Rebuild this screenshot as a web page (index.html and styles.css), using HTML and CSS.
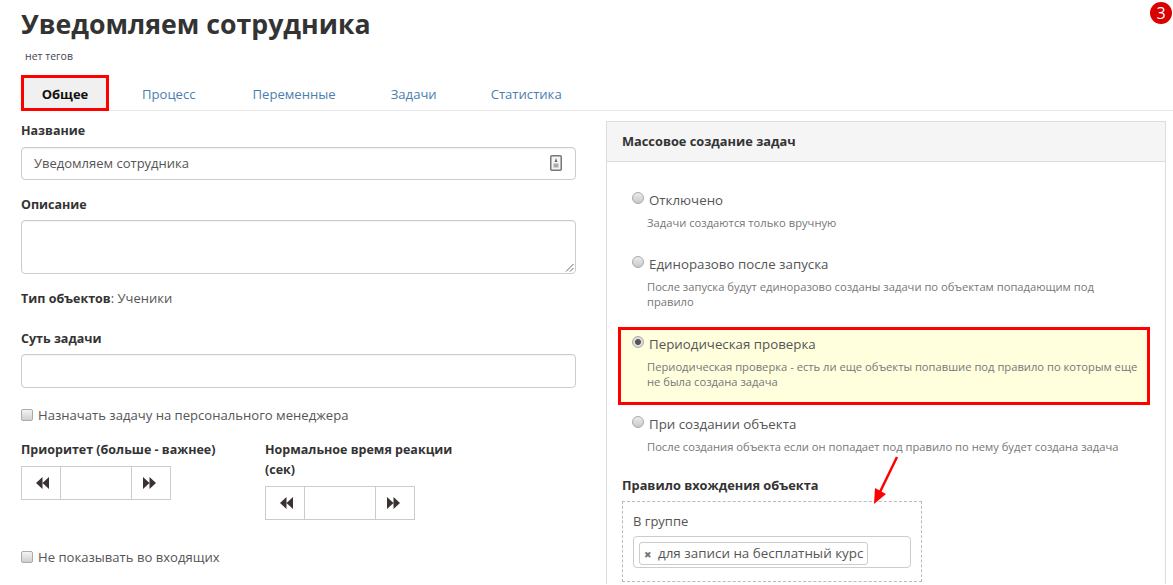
FILE: index.html
```html
<!DOCTYPE html>
<html lang="ru">
<head>
<meta charset="UTF-8" />
<meta name="viewport" content="width=device-width, initial-scale=1.0" />
<link rel="stylesheet" href="styles.css">
</head>
<body>
<div class="badge">3</div>

<h1>Уведомляем сотрудника</h1>
<div class="tags">нет тегов</div>

<nav class="tabs">
    <a class="tab active">Общее</a>
    <a class="tab t-process">Процесс</a>
    <a class="tab t-vars">Переменные</a>
    <a class="tab t-tasks">Задачи</a>
    <a class="tab t-stats">Статистика</a>
</nav>

<div class="columns">
    <div class="left">
        <label class="field-label">Название</label>
        <div class="input name-input">
            <span>Уведомляем сотрудника</span>
            <svg width="12" height="16" viewBox="0 0 12 16">
                <rect x="0.75" y="0.75" width="10.5" height="14.5" rx="1" fill="#f4f4f4" stroke="#777" stroke-width="1.5"/>
                <path d="M6 3l1.4 4H4.6z" fill="#666"/>
                <rect x="3.5" y="8.5" width="5" height="4" fill="#aaa"/>
            </svg>
        </div>

        <label class="field-label descr-label">Описание</label>
        <div class="textarea">
            <svg class="grip" width="9" height="9" viewBox="0 0 9 9"><path d="M8.5 1L1 8.5M8.5 5L5 8.5" stroke="#666" stroke-width="1"/></svg>
        </div>

        <div class="obj-type"><b>Тип объектов</b>: Ученики</div>

        <label class="field-label essence-label">Суть задачи</label>
        <div class="input essence-input"></div>

        <label class="check manager-check"><input type="checkbox"> Назначать задачу на персонального менеджера</label>

        <div class="spin-row">
            <div class="spin-col first">
                <label class="field-label">Приоритет (больше - важнее)</label>
                <div class="spinner">
                    <button><svg width="13" height="12" viewBox="0 0 13 12"><path d="M6.500 0v12L0 6zM13 0v12L6.500 6z"/></svg></button>
                    <div class="spin-value"></div>
                    <button><svg width="13" height="12" viewBox="0 0 13 12"><path d="M0 0v12l6.500-6zM6.500 0v12L13 6z"/></svg></button>
                </div>
            </div>
            <div class="spin-col">
                <label class="field-label">Нормальное время реакции (сек)</label>
                <div class="spinner">
                    <button><svg width="13" height="12" viewBox="0 0 13 12"><path d="M6.500 0v12L0 6zM13 0v12L6.500 6z"/></svg></button>
                    <div class="spin-value"></div>
                    <button><svg width="13" height="12" viewBox="0 0 13 12"><path d="M0 0v12l6.500-6zM6.500 0v12L13 6z"/></svg></button>
                </div>
            </div>
        </div>

        <label class="check inbox-check"><input type="checkbox"> Не показывать во входящих</label>
    </div>

    <div class="panel">
        <div class="panel-head">Массовое создание задач</div>
        <div class="panel-body">
            <div class="option opt-off">
                <label><input type="radio" name="mode"> Отключено</label>
                <p>Задачи создаются только вручную</p>
            </div>
            <div class="option opt-once">
                <label><input type="radio" name="mode"> Единоразово после запуска</label>
                <p>После запуска будут единоразово созданы задачи по объектам попадающим под правило</p>
            </div>
            <div class="option selected">
                <label><input type="radio" name="mode" checked> Периодическая проверка</label>
                <p>Периодическая проверка - есть ли еще объекты попавшие под правило по которым еще не была создана задача</p>
            </div>
            <div class="option opt-create">
                <label><input type="radio" name="mode"> При создании объекта</label>
                <p>После создания объекта если он попадает под правило по нему будет создана задача</p>
            </div>

            <div class="rule-title">Правило вхождения объекта</div>
            <div class="rule-box">
                <div class="rule-name">В группе</div>
                <div class="rule-input">
                    <span class="chip"><i>✖</i>для записи на бесплатный курс</span>
                </div>
            </div>
        </div>
    </div>
</div>

<svg class="arrow" width="30" height="52" viewBox="0 0 30 52">
    <path d="M26 1L8 38" stroke="#f00" stroke-width="2.500" fill="none"/>
    <path d="M3 48l1-16 11 6z" fill="#f00"/>
</svg>
</body>
</html>
```
FILE: styles.css
```css
html, body {
    margin: 0;
    height: 585px;
    overflow: hidden;
}
body {
    position: relative;
    background: #fff;
    color: #555;
    font-family: "Open Sans", "Liberation Sans", sans-serif;
    font-size: 14px;
    padding-left: 21px;
    box-sizing: border-box;
}
h1 {
    margin: 0;
    padding-top: 6px;
    font-size: 26.700px;
    line-height: 36px;
    font-weight: 700;
    color: #333;
}
.tags {
    margin: 7px 0 0 4px;
    font-size: 10.500px;
    line-height: 14px;
    color: #445;
}
.badge {
    position: absolute;
    top: 2px;
    right: 1px;
    width: 22px;
    height: 22px;
    border-radius: 50%;
    background: #d90000;
    color: #fff;
    font-size: 16px;
    line-height: 22px;
    text-align: center;
}
.tabs {
    display: flex;
    margin-top: 12px;
    height: 35px;
    width: 1152px;
    border-bottom: 1px solid #e8e8e8;
}
.tab {
    color: #4a7eaf;
    font-size: 13.100px;
    line-height: 38px;
    white-space: nowrap;
}
.tab.active {
    box-sizing: border-box;
    width: 88px;
    height: 36px;
    border: 3px solid #f00;
    background: #f0f0f0;
    color: #111;
    font-weight: 700;
    font-size: 13px;
    text-align: center;
    line-height: 32px;
}
.t-process { margin-left: 33px; }
.t-vars { margin-left: 57px; }
.t-tasks { margin-left: 55px; }
.t-stats { margin-left: 54px; }

.columns {
    display: flex;
    gap: 30px;
    align-items: flex-start;
}
.left {
    width: 555px;
    padding-top: 10px;
}
.field-label {
    display: block;
    font-weight: 700;
    font-size: 12.500px;
    line-height: 20px;
    color: #333;
}
.input {
    box-sizing: border-box;
    display: flex;
    justify-content: space-between;
    align-items: center;
    border: 1px solid #ccc;
    border-radius: 4px;
    padding: 0 13px 2px 12px;
    font-size: 13px;
    color: #555;
    box-shadow: inset 0 1px 1px rgba(0,0,0,0.05);
}
.name-input { height: 33px; margin-top: 6px; }
.descr-label { margin-top: 15px; }
.textarea {
    box-sizing: border-box;
    position: relative;
    height: 54px;
    margin-top: 5px;
    border: 1px solid #ccc;
    border-radius: 4px;
    box-shadow: inset 0 1px 1px rgba(0,0,0,0.05);
}
.grip {
    position: absolute;
    right: 1px;
    bottom: 1px;
}
.obj-type {
    margin-top: 14px;
    font-size: 13px;
    line-height: 20px;
}
.obj-type b { color: #333; font-size: 12.500px; }
.essence-label { margin-top: 20px; }
.essence-input { height: 34px; margin-top: 5px; }
.check {
    display: flex;
    align-items: center;
    font-size: 13.100px;
    line-height: 20px;
    gap: 5px;
}
.check input {
    appearance: none;
    margin: 0;
    width: 12px;
    height: 12px;
    border: 1px solid #aaa;
    border-radius: 2px;
    background: linear-gradient(#f4f4f4, #cfcfcf);
}
.manager-check { margin-top: 17px; }
.spin-row {
    display: flex;
    margin-top: 15px;
}
.spin-col { width: 200px; }
.spin-col.first { width: 244px; }
.spinner {
    display: flex;
    width: 150px;
    height: 34px;
    margin-top: 6px;
    box-sizing: border-box;
    border: 1px solid #ccc;
}
.spinner button {
    all: unset;
    width: 38px;
    display: flex;
    align-items: center;
    justify-content: center;
}
.spinner button:first-child svg { margin-left: 2px; }
.spinner button:last-child svg { margin-right: 3px; }
.spinner svg { fill: #3a3230; }
.spin-value {
    flex: 1;
    border-left: 1px solid #ccc;
    border-right: 1px solid #ccc;
}
.inbox-check { position: absolute; top: 547px; left: 21px; }

.panel {
    box-sizing: border-box;
    width: 560px;
    height: 463px;
    margin-top: 10px;
    border: 1px solid #ddd;
    border-bottom: none;
}
.panel-head {
    height: 39px;
    padding-left: 15px;
    background: #f5f5f5;
    border-bottom: 1px solid #ddd;
    color: #333;
    font-weight: 700;
    font-size: 12.800px;
    line-height: 38px;
}
.panel-body { padding: 0 15px; }
.option label {
    display: flex;
    align-items: flex-start;
    gap: 5px;
    font-size: 13.300px;
    line-height: 20px;
    color: #555;
}
.option input {
    appearance: none;
    width: 12px;
    height: 12px;
    margin: 2px 0 0 10px;
    border: 1px solid #aaa;
    border-radius: 50%;
    background: linear-gradient(#ececec, #c8c8c8);
    box-sizing: border-box;
}
.option input:checked {
    background: radial-gradient(circle, #555 0 2.500px, #ddd 3.500px);
}
.option p {
    max-width: 493px;
    margin: 5px 0 0 25px;
    font-size: 11.200px;
    line-height: 15px;
    color: #777;
}
.opt-off { padding-top: 28px; }
.opt-once { padding-top: 24px; }
.option.selected {
    box-sizing: border-box;
    height: 78px;
    margin: 18px 0 0 -4px;
    width: 532px;
    padding: 4px 4px 0 1px;
    border: 3px solid #f00;
    background: #ffffdd;
}
.opt-create { padding-top: 9px; }
.rule-title {
    margin-top: 21px;
    color: #333;
    font-weight: 700;
    font-size: 12.800px;
    line-height: 20px;
}
.rule-box {
    box-sizing: border-box;
    width: 300px;
    height: 81px;
    margin-top: 6px;
    padding: 9px 10px;
    border: 1px dashed #bbb;
}
.rule-name {
    font-size: 13px;
    line-height: 20px;
}
.rule-input {
    box-sizing: border-box;
    height: 32px;
    margin-top: 5px;
    padding: 5px;
    border: 1px solid #ccc;
    border-radius: 4px;
}
.chip {
    box-sizing: border-box;
    display: inline-block;
    width: 229px;
    height: 23px;
    padding-left: 4px;
    border: 1px solid #ccc;
    border-radius: 3px;
    font-size: 13.400px;
    line-height: 21px;
    white-space: nowrap;
}
.chip i {
    display: inline-block;
    width: 14px;
    font-style: normal;
    font-size: 9px;
    color: #777;
}
.arrow {
    position: absolute;
    left: 871px;
    top: 456px;
}
```
